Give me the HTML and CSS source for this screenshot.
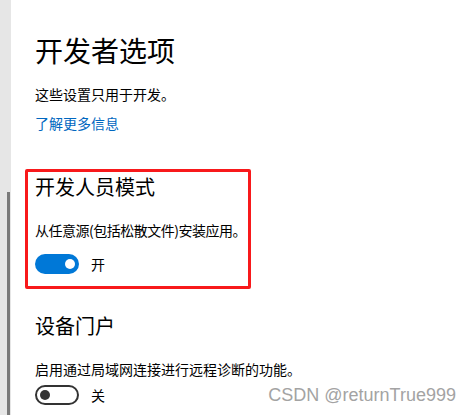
FILE: index.html
```html
<!DOCTYPE html>
<html lang="zh-CN">
  <head>
    <meta charset="UTF-8" />
    <title>开发者选项</title>
    <link rel="stylesheet" href="styles.css">
  </head>
  <body>
    <div class="page">
      <!-- left pane edge with scrollbar -->
      <div class="rail">
        <div class="thumb"></div>
      </div>

      <div class="main">
        <h1>开发者选项</h1>
        <p class="desc first">这些设置只用于开发。</p>
        <a class="more" href="#">了解更多信息</a>

        <!-- Developer mode (highlighted) -->
        <div class="section marked">
          <h2>开发人员模式</h2>
          <p class="desc tight">从任意源(包括松散文件)安装应用。</p>
          <div class="switch-row">
            <span class="switch on"><span class="knob"></span></span>
            <span class="state">开</span>
          </div>
        </div>

        <!-- Device portal -->
        <div class="section portal">
          <h2>设备门户</h2>
          <p class="desc">启用通过局域网连接进行远程诊断的功能。</p>
          <div class="switch-row near">
            <span class="switch off"><span class="knob"></span></span>
            <span class="state">关</span>
          </div>
        </div>
      </div>
    </div>

    <div class="watermark">CSDN @returnTrue999</div>
  </body>
</html>
```

FILE: styles.css
```css
html,
body {
  margin: 0;
  height: 100%;
  overflow: hidden;
  background: #fff;
}
body {
  font-family: "Noto Sans CJK SC", "Liberation Sans", sans-serif;
  color: #000;
}
.page {
  display: flex;
  height: 100%;
}
.rail {
  width: 11px;
  flex: none;
  background: #e6e6e6;
  padding-top: 192px;
  box-sizing: border-box;
}
.thumb {
  margin-left: 7px;
  width: 3px;
  height: 100%;
  background: #7a7a7a;
}
.main {
  padding: 30px 0 0 24px;
  display: flex;
  flex-direction: column;
  align-items: flex-start;
}
h1 {
  margin: 0;
  font-size: 28px;
  font-weight: 400;
  line-height: 40px;
}
h2 {
  margin: 0;
  font-size: 20px;
  font-weight: 400;
  line-height: 28px;
}
.desc {
  margin: 19px 0 0;
  font-size: 14px;
  line-height: 20px;
  white-space: nowrap;
}
.desc.first {
  margin-top: 14px;
}
.desc.tight {
  letter-spacing: -0.5px;
}
.more {
  margin-top: 9px;
  font-size: 14px;
  line-height: 20px;
  color: #0067c0;
  text-decoration: none;
}
.section.marked {
  margin: 36px 0 0 -10px;
  width: 226px;
  box-sizing: border-box;
  padding: 1px 0 12px 7px;
  border: 3px solid #f8191b;
  border-radius: 2px;
}
.section.portal {
  margin-top: 23px;
}
.switch-row {
  display: flex;
  align-items: center;
  margin-top: 14px;
  height: 20px;
}
.switch-row.near {
  margin-top: 6px;
}
.switch {
  width: 44px;
  height: 20px;
  box-sizing: border-box;
  border-radius: 10px;
  display: flex;
  align-items: center;
}
.switch.on {
  background: #0078d7;
  justify-content: flex-end;
  padding-right: 4px;
}
.switch.off {
  border: 2px solid #333;
  padding-left: 3px;
}
.knob {
  width: 10px;
  height: 10px;
  border-radius: 50%;
}
.on .knob {
  background: #fff;
}
.off .knob {
  background: #333;
}
.state {
  margin-left: 12px;
  font-size: 14px;
  line-height: 20px;
}
.watermark {
  position: absolute;
  right: 15px;
  bottom: 9px;
  font-family: "Liberation Sans", Arial, sans-serif;
  font-size: 18px;
  color: #a3a3a3;
}
```
